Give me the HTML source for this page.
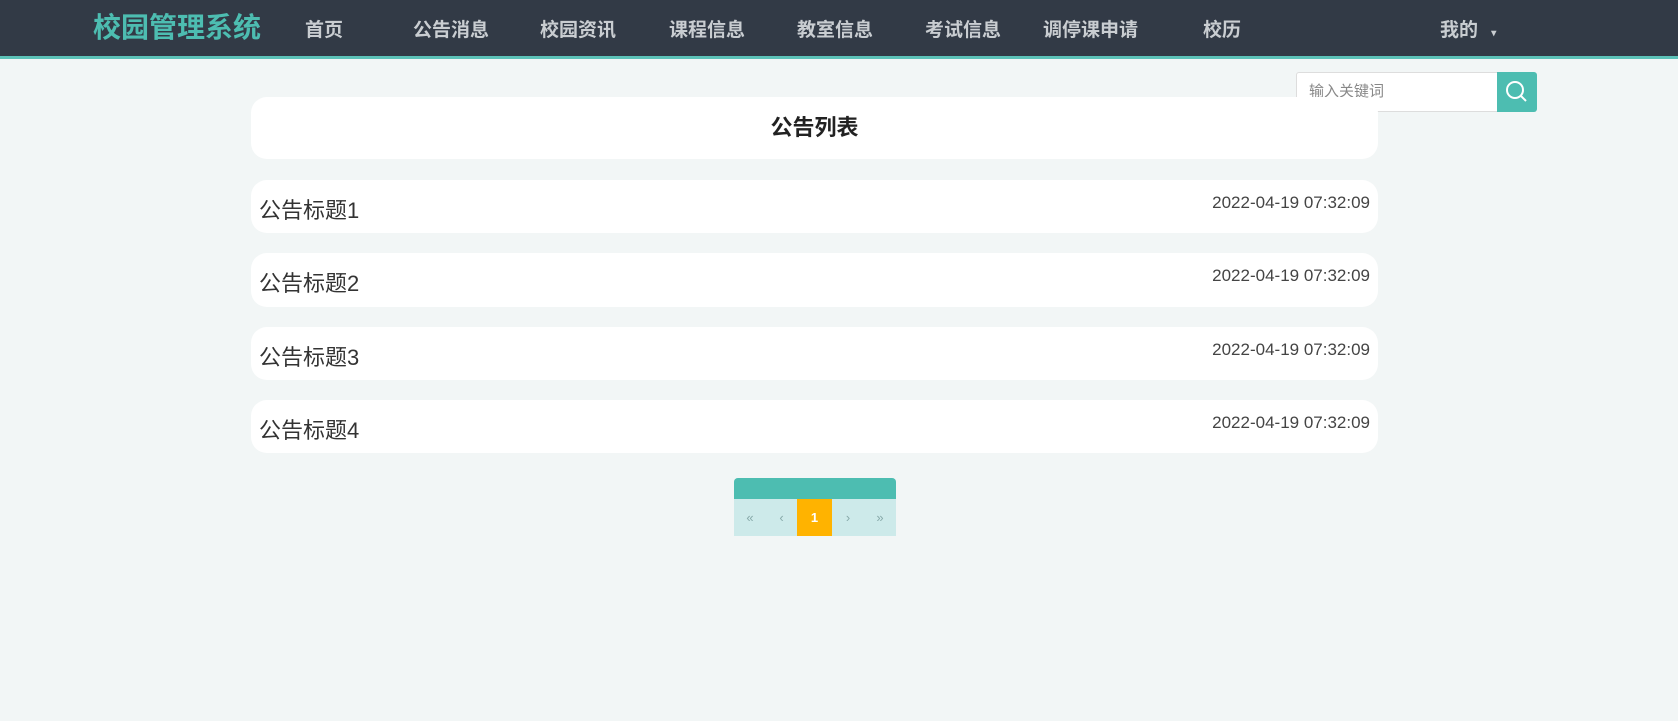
<!DOCTYPE html>
<html><head><meta charset="utf-8"><style>
*{margin:0;padding:0;box-sizing:border-box}
body{width:1678px;height:721px;background:#f2f6f6;font-family:"Liberation Sans","Noto Sans CJK SC",sans-serif;position:relative;overflow:hidden}
.nav{position:absolute;left:0;top:0;width:1678px;height:59px;background:#323a46;border-bottom:3px solid #5cc2b8}
.nav span{position:absolute;top:16px;font-size:19px;font-weight:bold;color:#c9cdd1;line-height:30px}
.logo{color:#4dbdb1!important;font-size:28px!important;top:13px!important}
.card{position:absolute;left:251px;width:1127px;background:#fff;border-radius:16px}
.row .t{position:absolute;left:8px;top:13px;font-size:22px;color:#333}
.row .d{position:absolute;right:8px;top:13px;font-size:17px;color:#444}
</style></head><body>
<div class="nav">
<span class="logo" style="left:93px">校园管理系统</span>
<span style="left:305px">首页</span>
<span style="left:413px">公告消息</span>
<span style="left:540px">校园资讯</span>
<span style="left:669px">课程信息</span>
<span style="left:797px">教室信息</span>
<span style="left:925px">考试信息</span>
<span style="left:1043px">调停课申请</span>
<span style="left:1203px">校历</span>
<span style="left:1440px">我的 <small style="font-size:10px;margin-left:8px">▾</small></span>
</div>
<div style="position:absolute;left:1296px;top:72px;width:202px;height:40px;background:#fff;border:1px solid #ddd;border-radius:3px 0 0 3px;font-size:15px;color:#888;padding:0 12px;line-height:38px">输入关键词</div>
<div style="position:absolute;left:1497px;top:72px;width:40px;height:40px;background:#4dbdb1;border-radius:0 3px 3px 0">
<svg width="40" height="40"><circle cx="18" cy="18" r="8" fill="none" stroke="#fff" stroke-width="2"/><line x1="24" y1="24" x2="29" y2="29" stroke="#fff" stroke-width="2"/></svg></div>
<div class="card" style="top:97px;height:62px;text-align:center;font-size:22px;font-weight:bold;color:#222;line-height:62px">公告列表</div>
<div class="card row" style="top:180px;height:53px"><span class="t">公告标题1</span><span class="d">2022-04-19 07:32:09</span></div>
<div class="card row" style="top:253px;height:54px"><span class="t">公告标题2</span><span class="d">2022-04-19 07:32:09</span></div>
<div class="card row" style="top:327px;height:53px"><span class="t">公告标题3</span><span class="d">2022-04-19 07:32:09</span></div>
<div class="card row" style="top:400px;height:53px"><span class="t">公告标题4</span><span class="d">2022-04-19 07:32:09</span></div>
<div style="position:absolute;left:734px;top:478px;width:162px;height:58px;border-radius:4px 4px 0 0;overflow:hidden;background:#cdeaea">
<div style="height:21px;background:#4dbdb1"></div>
<div style="display:flex;height:37px;font-size:13px;color:#8aa;line-height:37px;text-align:center">
<div style="width:32px">«</div><div style="width:31px">‹</div><div style="width:35px;background:#ffb300;color:#fff;font-weight:bold">1</div><div style="width:32px">›</div><div style="width:32px">»</div>
</div></div>
</body></html>
